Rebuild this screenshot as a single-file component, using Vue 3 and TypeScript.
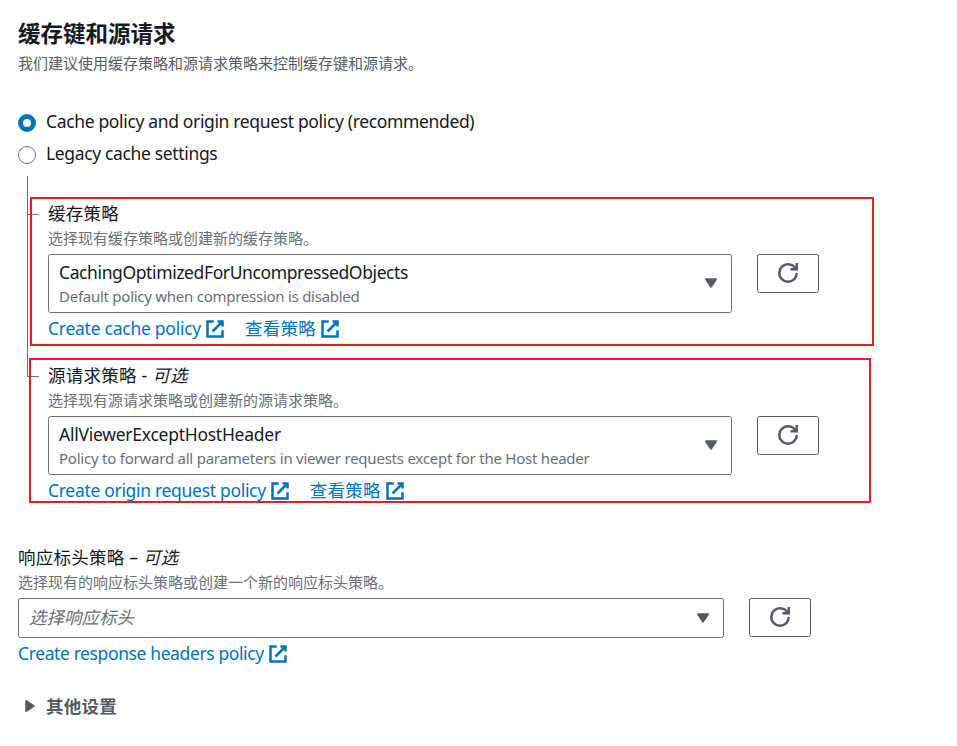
<script setup lang="ts">
import { ref } from 'vue'

interface LinkItem {
  text: string
  cls: string
}
interface PolicyField {
  id: string
  label: string
  optional?: string
  hint: string
  value: string
  valueCls: string
  detail: string
  detailCls: string
  links: LinkItem[]
}

const mode = ref<'policy' | 'legacy'>('policy')

const modes: { id: 'policy' | 'legacy'; text: string }[] = [
  { id: 'policy', text: 'Cache policy and origin request policy (recommended)' },
  { id: 'legacy', text: 'Legacy cache settings' },
]

const fields: PolicyField[] = [
  {
    id: 'cache',
    label: '缓存策略',
    hint: '选择现有缓存策略或创建新的缓存策略。',
    value: 'CachingOptimizedForUncompressedObjects',
    valueCls: 'tight-4',
    detail: 'Default policy when compression is disabled',
    detailCls: 'tight-2',
    links: [
      { text: 'Create cache policy', cls: 'tight-2' },
      { text: '查看策略', cls: 'cjk' },
    ],
  },
  {
    id: 'origin',
    label: '源请求策略',
    optional: '可选',
    hint: '选择现有源请求策略或创建新的源请求策略。',
    value: 'AllViewerExceptHostHeader',
    valueCls: 'tight-2',
    detail: 'Policy to forward all parameters in viewer requests except for the Host header',
    detailCls: 'tight-1',
    links: [
      { text: 'Create origin request policy', cls: 'tight-3' },
      { text: '查看策略', cls: 'cjk' },
    ],
  },
]
</script>

<template>
  <main class="page">
    <h2 class="title">缓存键和源请求</h2>
    <p class="hint intro">我们建议使用缓存策略和源请求策略来控制缓存键和源请求。</p>

    <div class="modes" role="radiogroup">
      <div
        v-for="m in modes"
        :key="m.id"
        class="mode"
        role="radio"
        :aria-checked="mode === m.id"
        @click="mode = m.id"
      >
        <span class="dot" :class="{ on: mode === m.id }"></span>
        <span class="mode-text">{{ m.text }}</span>
      </div>
    </div>

    <div class="tree">
      <section v-for="f in fields" :key="f.id" class="field branch" :class="f.id">
        <div class="label cjk">
          {{ f.label }}<template v-if="f.optional"> - <em>{{ f.optional }}</em></template>
        </div>
        <p class="hint">{{ f.hint }}</p>
        <div class="row">
          <div class="select tall">
            <div class="lines">
              <span class="value" :class="f.valueCls">{{ f.value }}</span>
              <span class="detail" :class="f.detailCls">{{ f.detail }}</span>
            </div>
            <svg class="icon caret" viewBox="0 0 16 16"><path d="M4 5h8l-4 6z" /></svg>
          </div>
          <button class="refresh" type="button">
            <svg class="icon stroke" viewBox="0 0 16 16">
              <path d="M10 5h5V0" />
              <path d="M15 8a6.957 6.957 0 0 1-7 7 6.957 6.957 0 0 1-7-7 6.957 6.957 0 0 1 7-7 6.87 6.87 0 0 1 6.3 4" />
            </svg>
          </button>
        </div>
        <div class="links">
          <a v-for="l in f.links" :key="l.text" class="link">
            <span :class="l.cls">{{ l.text }}</span>
            <svg class="icon stroke" viewBox="0 0 16 16">
              <path d="M10 2h4v4" />
              <path d="m6 10 8-8" />
              <path d="M14 9.048V14H2V2h5" />
            </svg>
          </a>
        </div>
        <div class="mark"></div>
      </section>
    </div>

    <section class="field response">
      <div class="label cjk">响应标头策略 – <em>可选</em></div>
      <p class="hint">选择现有的响应标头策略或创建一个新的响应标头策略。</p>
      <div class="row">
        <div class="select">
          <em class="placeholder">选择响应标头</em>
          <svg class="icon caret" viewBox="0 0 16 16"><path d="M4 5h8l-4 6z" /></svg>
        </div>
        <button class="refresh" type="button">
          <svg class="icon stroke" viewBox="0 0 16 16">
            <path d="M10 5h5V0" />
            <path d="M15 8a6.957 6.957 0 0 1-7 7 6.957 6.957 0 0 1-7-7 6.957 6.957 0 0 1 7-7 6.87 6.87 0 0 1 6.3 4" />
          </svg>
        </button>
      </div>
      <div class="links">
        <a class="link">
          <span class="tight-4">Create response headers policy</span>
          <svg class="icon stroke" viewBox="0 0 16 16">
            <path d="M10 2h4v4" />
            <path d="m6 10 8-8" />
            <path d="M14 9.048V14H2V2h5" />
          </svg>
        </a>
      </div>
    </section>

    <div class="more">
      <svg class="icon caret" viewBox="0 0 16 16"><path d="M5 4v8l6-4z" /></svg>
      <span class="cjk">其他设置</span>
    </div>
  </main>
</template>

<style>
body {
  background: #fff;
}
</style>

<style scoped>
.page {
  box-sizing: border-box;
  width: 957px;
  height: 746px;
  padding: 20px 18px 0;
  overflow: hidden;
  font-family: 'Noto Sans', 'Noto Sans CJK SC', sans-serif;
  font-size: 17.5px;
  line-height: 22px;
  color: #16191f;
  white-space: nowrap;
}
.tight-1 {
  letter-spacing: -0.23px;
}
.tight-2 {
  letter-spacing: -0.26px;
}
.tight-3 {
  letter-spacing: -0.31px;
}
.tight-4 {
  letter-spacing: -0.39px;
}
.cjk {
  letter-spacing: 0.25px;
}
.title {
  margin: 0;
  height: 28px;
  font-size: 22.5px;
  line-height: 28px;
  font-weight: 700;
}
.hint {
  margin: 4px 0 0;
  height: 20px;
  font-size: 15px;
  line-height: 20px;
  color: #687078;
}
.intro {
  margin-top: 5px;
  color: #545b64;
}
.modes {
  display: flex;
  flex-direction: column;
  gap: 10px;
  margin-top: 38px;
}
.mode {
  display: flex;
  align-items: center;
  gap: 10px;
  height: 22px;
}
.mode-text {
  padding-bottom: 2px;
  letter-spacing: -0.35px;
}
.dot {
  box-sizing: border-box;
  width: 18px;
  height: 18px;
  margin-top: 2px;
  border: 1px solid #687078;
  border-radius: 50%;
  background: #fff;
}
.dot.on {
  border: 5.5px solid #0073bb;
}
.tree {
  display: flex;
  flex-direction: column;
  gap: 23px;
  margin-top: 11px;
  padding: 26px 0 0 30px;
}
.branch {
  position: relative;
}
.branch::before {
  content: '';
  position: absolute;
  left: -21px;
  top: -26px;
  width: 11px;
  height: 38px;
  border: solid #687078;
  border-width: 0 0 1px 1px;
}
.branch.origin::before {
  top: -150px;
  height: 162px;
}
.mark {
  position: absolute;
  box-sizing: border-box;
  left: -18px;
  top: -5px;
  width: 844px;
  height: 149px;
  border: 2px solid #ed1c24;
  pointer-events: none;
}
.origin .mark {
  left: -19px;
  top: -6px;
  width: 842px;
  height: 145px;
}
.label {
  height: 22px;
}
.row {
  display: flex;
  align-items: flex-start;
  gap: 25px;
  margin-top: 6px;
}
.select {
  box-sizing: border-box;
  display: flex;
  align-items: center;
  justify-content: space-between;
  width: 706px;
  height: 40px;
  padding: 0 10px;
  border: 1px solid #687078;
  border-radius: 2.5px;
}
.select.tall {
  width: 684px;
  height: 59px;
}
.tall .caret {
  margin-bottom: 1px;
}
.lines {
  display: flex;
  flex-direction: column;
  gap: 2px;
}
.detail {
  font-size: 15px;
  color: #687078;
}
.placeholder {
  padding-bottom: 2px;
  color: #687078;
}
.refresh {
  box-sizing: border-box;
  display: flex;
  justify-content: center;
  width: 62px;
  height: 39px;
  padding: 8px 0 0;
  border: 1px solid #545b64;
  border-radius: 2.5px;
  background: #fff;
  color: #545b64;
}
.icon {
  flex: none;
  display: block;
  width: 20px;
  height: 20px;
}
.stroke {
  fill: none;
  stroke: currentColor;
  stroke-width: 2;
}
.caret {
  fill: #545b64;
  stroke: #545b64;
  stroke-width: 1.6;
  stroke-linejoin: round;
}
.links {
  display: flex;
  gap: 20px;
  height: 24px;
  margin-top: 4px;
}
.link {
  display: flex;
  align-items: center;
  gap: 4px;
  color: #0073bb;
}
.link span {
  padding-bottom: 2px;
}
.response {
  margin-top: 43px;
}
.more {
  display: flex;
  align-items: center;
  gap: 6px;
  height: 22px;
  margin-top: 29px;
  padding-left: 2px;
  font-weight: 700;
  color: #545b64;
}
</style>
